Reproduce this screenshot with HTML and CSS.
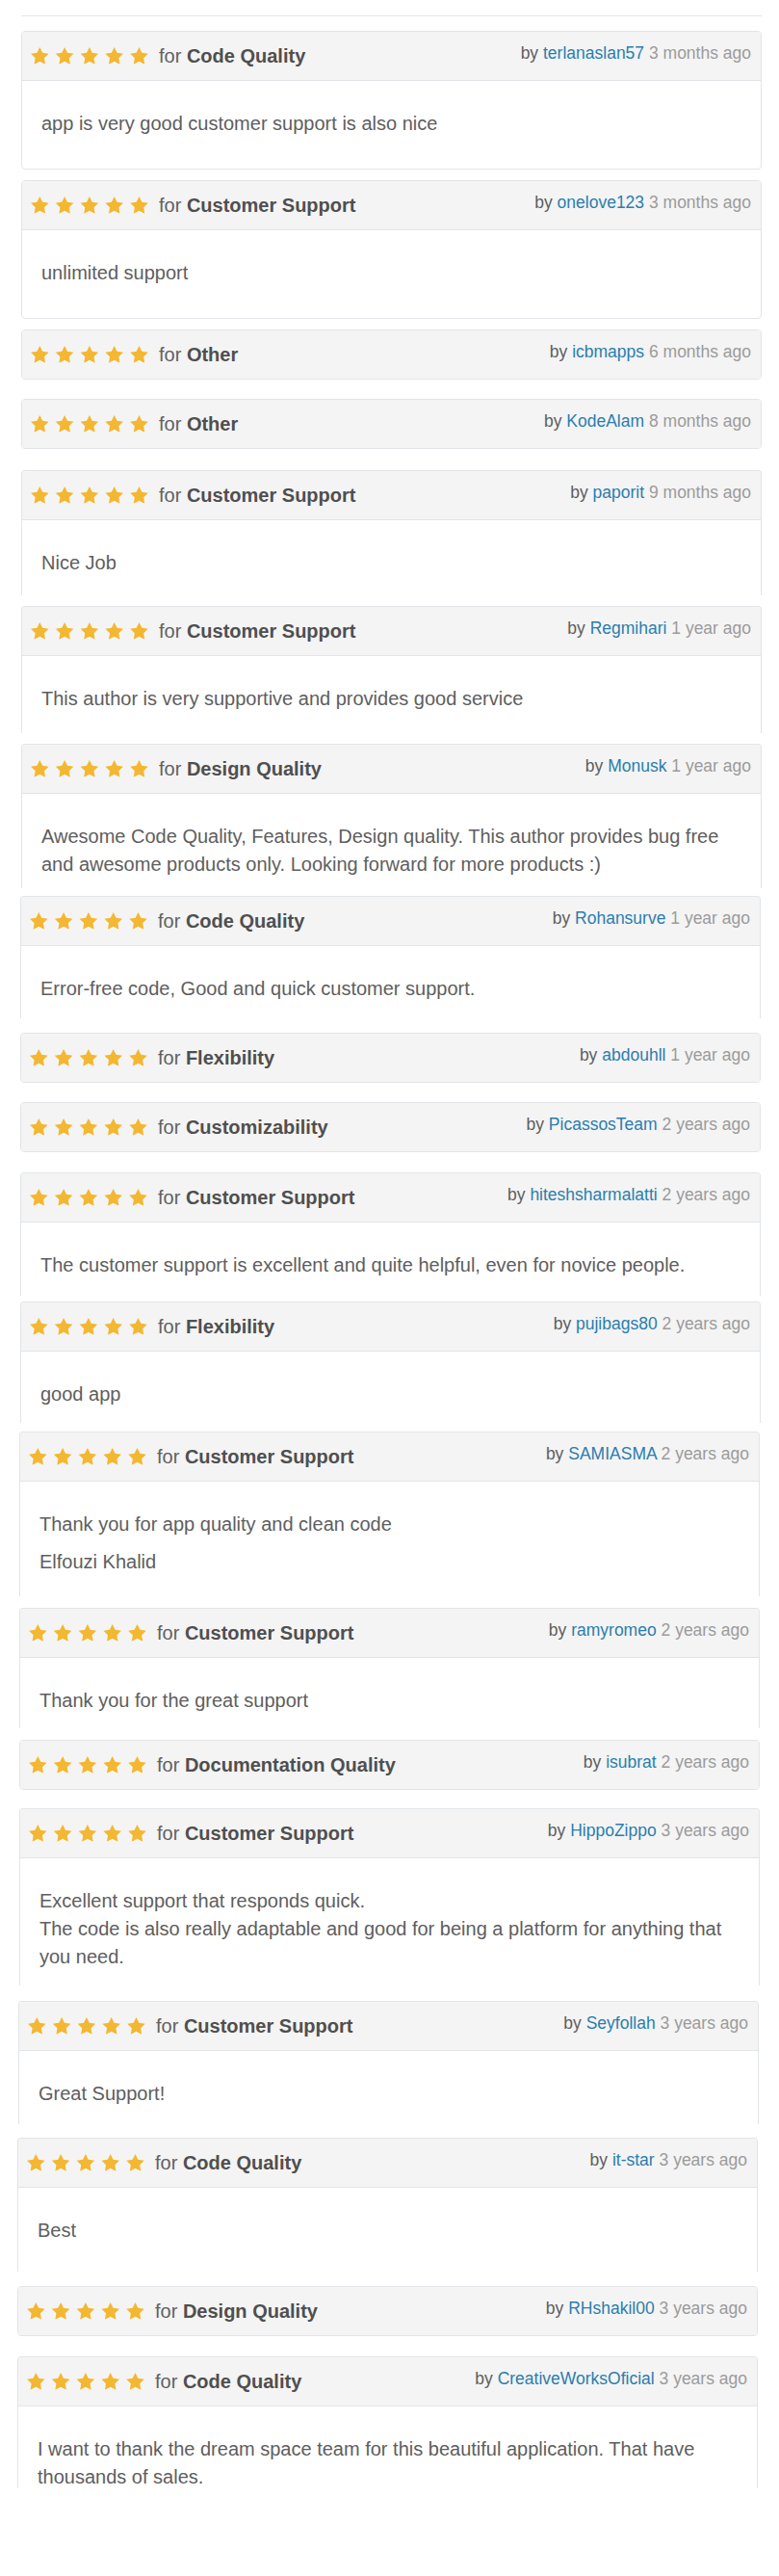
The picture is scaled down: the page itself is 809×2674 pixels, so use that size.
FILE: index.html
```html
<!DOCTYPE html>
<html lang="en">
<head>
<meta charset="utf-8">
<title>Reviews</title>
<link rel="stylesheet" href="styles.css">
</head>
<body>
<svg class="defs" aria-hidden="true">
  <symbol id="star" viewBox="0 0 19.022 18.09">
    <path d="M9.511 0L12.45 5.955 19.022 6.91 14.266 11.545 15.389 18.09 9.511 15 3.633 18.09 4.756 11.545 0 6.91 6.572 5.955Z"/>
  </symbol>
</svg>
<div class="page">
  <hr class="rule">
  <div class="reviews">

    <article class="review review--text">
      <header class="review__head">
        <div class="review__rating">
          <svg class="stars" viewBox="0 0 122 18"><use href="#star" x="0" width="18.6" height="17.7"/><use href="#star" x="25.8" width="18.6" height="17.7"/><use href="#star" x="51.6" width="18.6" height="17.7"/><use href="#star" x="77.4" width="18.6" height="17.7"/><use href="#star" x="103.2" width="18.6" height="17.7"/></svg>
          <span class="review__for">for <strong>Code Quality</strong></span>
        </div>
        <div class="review__meta">by <a href="#">terlanaslan57</a> <span class="review__time">3 months ago</span></div>
      </header>
      <div class="review__body"><p>app is very good customer support is also nice</p></div>
    </article>

    <article class="review review--text">
      <header class="review__head">
        <div class="review__rating">
          <svg class="stars" viewBox="0 0 122 18"><use href="#star" x="0" width="18.6" height="17.7"/><use href="#star" x="25.8" width="18.6" height="17.7"/><use href="#star" x="51.6" width="18.6" height="17.7"/><use href="#star" x="77.4" width="18.6" height="17.7"/><use href="#star" x="103.2" width="18.6" height="17.7"/></svg>
          <span class="review__for">for <strong>Customer Support</strong></span>
        </div>
        <div class="review__meta">by <a href="#">onelove123</a> <span class="review__time">3 months ago</span></div>
      </header>
      <div class="review__body"><p>unlimited support</p></div>
    </article>

    <article class="review">
      <header class="review__head">
        <div class="review__rating">
          <svg class="stars" viewBox="0 0 122 18"><use href="#star" x="0" width="18.6" height="17.7"/><use href="#star" x="25.8" width="18.6" height="17.7"/><use href="#star" x="51.6" width="18.6" height="17.7"/><use href="#star" x="77.4" width="18.6" height="17.7"/><use href="#star" x="103.2" width="18.6" height="17.7"/></svg>
          <span class="review__for">for <strong>Other</strong></span>
        </div>
        <div class="review__meta">by <a href="#">icbmapps</a> <span class="review__time">6 months ago</span></div>
      </header>
    </article>

    <article class="review">
      <header class="review__head">
        <div class="review__rating">
          <svg class="stars" viewBox="0 0 122 18"><use href="#star" x="0" width="18.6" height="17.7"/><use href="#star" x="25.8" width="18.6" height="17.7"/><use href="#star" x="51.6" width="18.6" height="17.7"/><use href="#star" x="77.4" width="18.6" height="17.7"/><use href="#star" x="103.2" width="18.6" height="17.7"/></svg>
          <span class="review__for">for <strong>Other</strong></span>
        </div>
        <div class="review__meta">by <a href="#">KodeAlam</a> <span class="review__time">8 months ago</span></div>
      </header>
    </article>

    <article class="review review--text review--cut">
      <header class="review__head">
        <div class="review__rating">
          <svg class="stars" viewBox="0 0 122 18"><use href="#star" x="0" width="18.6" height="17.7"/><use href="#star" x="25.8" width="18.6" height="17.7"/><use href="#star" x="51.6" width="18.6" height="17.7"/><use href="#star" x="77.4" width="18.6" height="17.7"/><use href="#star" x="103.2" width="18.6" height="17.7"/></svg>
          <span class="review__for">for <strong>Customer Support</strong></span>
        </div>
        <div class="review__meta">by <a href="#">paporit</a> <span class="review__time">9 months ago</span></div>
      </header>
      <div class="review__body"><p>Nice Job</p></div>
    </article>

    <article class="review review--text review--cut">
      <header class="review__head">
        <div class="review__rating">
          <svg class="stars" viewBox="0 0 122 18"><use href="#star" x="0" width="18.6" height="17.7"/><use href="#star" x="25.8" width="18.6" height="17.7"/><use href="#star" x="51.6" width="18.6" height="17.7"/><use href="#star" x="77.4" width="18.6" height="17.7"/><use href="#star" x="103.2" width="18.6" height="17.7"/></svg>
          <span class="review__for">for <strong>Customer Support</strong></span>
        </div>
        <div class="review__meta">by <a href="#">Regmihari</a> <span class="review__time">1 year ago</span></div>
      </header>
      <div class="review__body"><p>This author is very supportive and provides good service</p></div>
    </article>

    <article class="review review--text review--cut">
      <header class="review__head">
        <div class="review__rating">
          <svg class="stars" viewBox="0 0 122 18"><use href="#star" x="0" width="18.6" height="17.7"/><use href="#star" x="25.8" width="18.6" height="17.7"/><use href="#star" x="51.6" width="18.6" height="17.7"/><use href="#star" x="77.4" width="18.6" height="17.7"/><use href="#star" x="103.2" width="18.6" height="17.7"/></svg>
          <span class="review__for">for <strong>Design Quality</strong></span>
        </div>
        <div class="review__meta">by <a href="#">Monusk</a> <span class="review__time">1 year ago</span></div>
      </header>
      <div class="review__body"><p>Awesome Code Quality, Features, Design quality. This author provides bug free and awesome products only. Looking forward for more products :)</p></div>
    </article>

    <article class="review review--text review--cut">
      <header class="review__head">
        <div class="review__rating">
          <svg class="stars" viewBox="0 0 122 18"><use href="#star" x="0" width="18.6" height="17.7"/><use href="#star" x="25.8" width="18.6" height="17.7"/><use href="#star" x="51.6" width="18.6" height="17.7"/><use href="#star" x="77.4" width="18.6" height="17.7"/><use href="#star" x="103.2" width="18.6" height="17.7"/></svg>
          <span class="review__for">for <strong>Code Quality</strong></span>
        </div>
        <div class="review__meta">by <a href="#">Rohansurve</a> <span class="review__time">1 year ago</span></div>
      </header>
      <div class="review__body"><p>Error-free code, Good and quick customer support.</p></div>
    </article>

    <article class="review">
      <header class="review__head">
        <div class="review__rating">
          <svg class="stars" viewBox="0 0 122 18"><use href="#star" x="0" width="18.6" height="17.7"/><use href="#star" x="25.8" width="18.6" height="17.7"/><use href="#star" x="51.6" width="18.6" height="17.7"/><use href="#star" x="77.4" width="18.6" height="17.7"/><use href="#star" x="103.2" width="18.6" height="17.7"/></svg>
          <span class="review__for">for <strong>Flexibility</strong></span>
        </div>
        <div class="review__meta">by <a href="#">abdouhll</a> <span class="review__time">1 year ago</span></div>
      </header>
    </article>

    <article class="review">
      <header class="review__head">
        <div class="review__rating">
          <svg class="stars" viewBox="0 0 122 18"><use href="#star" x="0" width="18.6" height="17.7"/><use href="#star" x="25.8" width="18.6" height="17.7"/><use href="#star" x="51.6" width="18.6" height="17.7"/><use href="#star" x="77.4" width="18.6" height="17.7"/><use href="#star" x="103.2" width="18.6" height="17.7"/></svg>
          <span class="review__for">for <strong>Customizability</strong></span>
        </div>
        <div class="review__meta">by <a href="#">PicassosTeam</a> <span class="review__time">2 years ago</span></div>
      </header>
    </article>

    <article class="review review--text review--cut">
      <header class="review__head">
        <div class="review__rating">
          <svg class="stars" viewBox="0 0 122 18"><use href="#star" x="0" width="18.6" height="17.7"/><use href="#star" x="25.8" width="18.6" height="17.7"/><use href="#star" x="51.6" width="18.6" height="17.7"/><use href="#star" x="77.4" width="18.6" height="17.7"/><use href="#star" x="103.2" width="18.6" height="17.7"/></svg>
          <span class="review__for">for <strong>Customer Support</strong></span>
        </div>
        <div class="review__meta">by <a href="#">hiteshsharmalatti</a> <span class="review__time">2 years ago</span></div>
      </header>
      <div class="review__body"><p>The customer support is excellent and quite helpful, even for novice people.</p></div>
    </article>

    <article class="review review--text review--cut">
      <header class="review__head">
        <div class="review__rating">
          <svg class="stars" viewBox="0 0 122 18"><use href="#star" x="0" width="18.6" height="17.7"/><use href="#star" x="25.8" width="18.6" height="17.7"/><use href="#star" x="51.6" width="18.6" height="17.7"/><use href="#star" x="77.4" width="18.6" height="17.7"/><use href="#star" x="103.2" width="18.6" height="17.7"/></svg>
          <span class="review__for">for <strong>Flexibility</strong></span>
        </div>
        <div class="review__meta">by <a href="#">pujibags80</a> <span class="review__time">2 years ago</span></div>
      </header>
      <div class="review__body"><p>good app</p></div>
    </article>

    <article class="review review--text review--cut">
      <header class="review__head">
        <div class="review__rating">
          <svg class="stars" viewBox="0 0 122 18"><use href="#star" x="0" width="18.6" height="17.7"/><use href="#star" x="25.8" width="18.6" height="17.7"/><use href="#star" x="51.6" width="18.6" height="17.7"/><use href="#star" x="77.4" width="18.6" height="17.7"/><use href="#star" x="103.2" width="18.6" height="17.7"/></svg>
          <span class="review__for">for <strong>Customer Support</strong></span>
        </div>
        <div class="review__meta">by <a href="#">SAMIASMA</a> <span class="review__time">2 years ago</span></div>
      </header>
      <div class="review__body"><p>Thank you for app quality and clean code</p><p>Elfouzi Khalid</p></div>
    </article>

    <article class="review review--text review--cut">
      <header class="review__head">
        <div class="review__rating">
          <svg class="stars" viewBox="0 0 122 18"><use href="#star" x="0" width="18.6" height="17.7"/><use href="#star" x="25.8" width="18.6" height="17.7"/><use href="#star" x="51.6" width="18.6" height="17.7"/><use href="#star" x="77.4" width="18.6" height="17.7"/><use href="#star" x="103.2" width="18.6" height="17.7"/></svg>
          <span class="review__for">for <strong>Customer Support</strong></span>
        </div>
        <div class="review__meta">by <a href="#">ramyromeo</a> <span class="review__time">2 years ago</span></div>
      </header>
      <div class="review__body"><p>Thank you for the great support</p></div>
    </article>

    <article class="review">
      <header class="review__head">
        <div class="review__rating">
          <svg class="stars" viewBox="0 0 122 18"><use href="#star" x="0" width="18.6" height="17.7"/><use href="#star" x="25.8" width="18.6" height="17.7"/><use href="#star" x="51.6" width="18.6" height="17.7"/><use href="#star" x="77.4" width="18.6" height="17.7"/><use href="#star" x="103.2" width="18.6" height="17.7"/></svg>
          <span class="review__for">for <strong>Documentation Quality</strong></span>
        </div>
        <div class="review__meta">by <a href="#">isubrat</a> <span class="review__time">2 years ago</span></div>
      </header>
    </article>

    <article class="review review--text review--cut">
      <header class="review__head">
        <div class="review__rating">
          <svg class="stars" viewBox="0 0 122 18"><use href="#star" x="0" width="18.6" height="17.7"/><use href="#star" x="25.8" width="18.6" height="17.7"/><use href="#star" x="51.6" width="18.6" height="17.7"/><use href="#star" x="77.4" width="18.6" height="17.7"/><use href="#star" x="103.2" width="18.6" height="17.7"/></svg>
          <span class="review__for">for <strong>Customer Support</strong></span>
        </div>
        <div class="review__meta">by <a href="#">HippoZippo</a> <span class="review__time">3 years ago</span></div>
      </header>
      <div class="review__body"><p>Excellent support that responds quick.<br>The code is also really adaptable and good for being a platform for anything that you need.</p></div>
    </article>

    <article class="review review--text review--cut">
      <header class="review__head">
        <div class="review__rating">
          <svg class="stars" viewBox="0 0 122 18"><use href="#star" x="0" width="18.6" height="17.7"/><use href="#star" x="25.8" width="18.6" height="17.7"/><use href="#star" x="51.6" width="18.6" height="17.7"/><use href="#star" x="77.4" width="18.6" height="17.7"/><use href="#star" x="103.2" width="18.6" height="17.7"/></svg>
          <span class="review__for">for <strong>Customer Support</strong></span>
        </div>
        <div class="review__meta">by <a href="#">Seyfollah</a> <span class="review__time">3 years ago</span></div>
      </header>
      <div class="review__body"><p>Great Support!</p></div>
    </article>

    <article class="review review--text review--cut">
      <header class="review__head">
        <div class="review__rating">
          <svg class="stars" viewBox="0 0 122 18"><use href="#star" x="0" width="18.6" height="17.7"/><use href="#star" x="25.8" width="18.6" height="17.7"/><use href="#star" x="51.6" width="18.6" height="17.7"/><use href="#star" x="77.4" width="18.6" height="17.7"/><use href="#star" x="103.2" width="18.6" height="17.7"/></svg>
          <span class="review__for">for <strong>Code Quality</strong></span>
        </div>
        <div class="review__meta">by <a href="#">it-star</a> <span class="review__time">3 years ago</span></div>
      </header>
      <div class="review__body"><p>Best</p></div>
    </article>

    <article class="review">
      <header class="review__head">
        <div class="review__rating">
          <svg class="stars" viewBox="0 0 122 18"><use href="#star" x="0" width="18.6" height="17.7"/><use href="#star" x="25.8" width="18.6" height="17.7"/><use href="#star" x="51.6" width="18.6" height="17.7"/><use href="#star" x="77.4" width="18.6" height="17.7"/><use href="#star" x="103.2" width="18.6" height="17.7"/></svg>
          <span class="review__for">for <strong>Design Quality</strong></span>
        </div>
        <div class="review__meta">by <a href="#">RHshakil00</a> <span class="review__time">3 years ago</span></div>
      </header>
    </article>

    <article class="review review--text review--cut">
      <header class="review__head">
        <div class="review__rating">
          <svg class="stars" viewBox="0 0 122 18"><use href="#star" x="0" width="18.6" height="17.7"/><use href="#star" x="25.8" width="18.6" height="17.7"/><use href="#star" x="51.6" width="18.6" height="17.7"/><use href="#star" x="77.4" width="18.6" height="17.7"/><use href="#star" x="103.2" width="18.6" height="17.7"/></svg>
          <span class="review__for">for <strong>Code Quality</strong></span>
        </div>
        <div class="review__meta">by <a href="#">CreativeWorksOficial</a> <span class="review__time">3 years ago</span></div>
      </header>
      <div class="review__body"><p>I want to thank the dream space team for this beautiful application. That have thousands of sales.</p></div>
    </article>

  </div>
</div>
</body>
</html>
```

FILE: styles.css
```css
* {
  box-sizing: border-box;
}

html,
body {
  margin: 0;
  background: #fff;
}

body {
  font-family: "Liberation Sans", Arial, Helvetica, sans-serif;
  color: #5e5e5e;
}

.defs {
  position: absolute;
  width: 0;
  height: 0;
  overflow: hidden;
}

.page {
  padding: 16px 18px 0 22px;
}

.rule {
  width: 769px;
  height: 1px;
  margin: 0 0 15px;
  border: 0;
  background: #e2e6e9;
}

.reviews {
  display: flex;
  flex-direction: column;
}

/* ---------- card ---------- */
.review {
  width: 769px;
  border: 1px solid #e1e5e8;
  border-radius: 4px;
  background: #fff;
  margin-bottom: 21px;
}

.review--text {
  margin-bottom: 11px;
}

.review--cut {
  border-bottom: 0;
  border-radius: 4px 4px 0 0;
}

.review__head {
  height: 50px;
  display: flex;
  align-items: center;
  justify-content: space-between;
  padding: 0 10px 0 9px;
  background: #f4f4f4;
  border-radius: 3px;
}

.review--text .review__head {
  height: 51px;
  border-bottom: 1px solid #e1e5e8;
  border-radius: 3px 3px 0 0;
}

.review__rating {
  display: flex;
  align-items: center;
}

.stars {
  display: block;
  width: 122px;
  height: 18px;
  fill: #f3b731;
}

.review__for {
  margin-left: 11px;
  font-size: 20px;
  color: #616161;
  white-space: nowrap;
}

.review__for strong {
  font-weight: 700;
  color: #4f4f4f;
}

.review__meta {
  margin-bottom: 6px;
  font-size: 17.5px;
  color: #5e5e5e;
  white-space: nowrap;
}

.review__meta a {
  color: #2a7eae;
  text-decoration: none;
}

.review__time {
  color: #9b9b9b;
}

.review__body {
  padding: 30px 20px 0;
  overflow: hidden;
  font-size: 20px;
  line-height: 29px;
  color: #5e5e5e;
}

.review__body p {
  margin: 0;
}

.review__body p + p {
  margin-top: 10px;
}

/* ---------- per-review body heights and spacing ---------- */
.review:nth-child(1) .review__body,
.review:nth-child(2) .review__body { height: 91px; }

.review:nth-child(3) { margin-bottom: 20px; }
.review:nth-child(4) { margin-bottom: 22px; }

.review:nth-child(5) .review__body { height: 78px; }
.review:nth-child(6) .review__body { height: 80px; }
.review:nth-child(7) .review__body { height: 98px; }
.review:nth-child(7) { margin-bottom: 8px; }
.review:nth-child(8) .review__body { height: 75px; }
.review:nth-child(8) { margin-bottom: 15px; }
.review:nth-child(9) { margin-bottom: 20px; }
.review:nth-child(11) .review__body { height: 76px; }
.review:nth-child(11) { margin-bottom: 6px; }
.review:nth-child(12) .review__body { height: 74px; }
.review:nth-child(12) { margin-bottom: 9px; }
.review:nth-child(13) .review__body { height: 119px; }
.review:nth-child(13) { margin-bottom: 12px; }
.review:nth-child(14) .review__body { height: 73px; }
.review:nth-child(14) { margin-bottom: 12px; }
.review:nth-child(15) { margin-bottom: 19px; }
.review:nth-child(16) .review__body { height: 132px; }
.review:nth-child(16) { margin-bottom: 16px; }
.review:nth-child(17) .review__body { height: 76px; }
.review:nth-child(17) { margin-bottom: 14px; }
.review:nth-child(18) .review__body { height: 87px; }
.review:nth-child(18) { margin-bottom: 15px; }
.review:nth-child(20) .review__body { height: 85px; }
.review:nth-child(20) { margin-bottom: 0; }

/* slight leftward drift of the lower cards */
.review:nth-child(n+8) { margin-left: -1px; }
.review:nth-child(n+13) { margin-left: -2px; }
.review:nth-child(17) { margin-left: -3px; }
.review:nth-child(n+18) { margin-left: -4px; }
```
